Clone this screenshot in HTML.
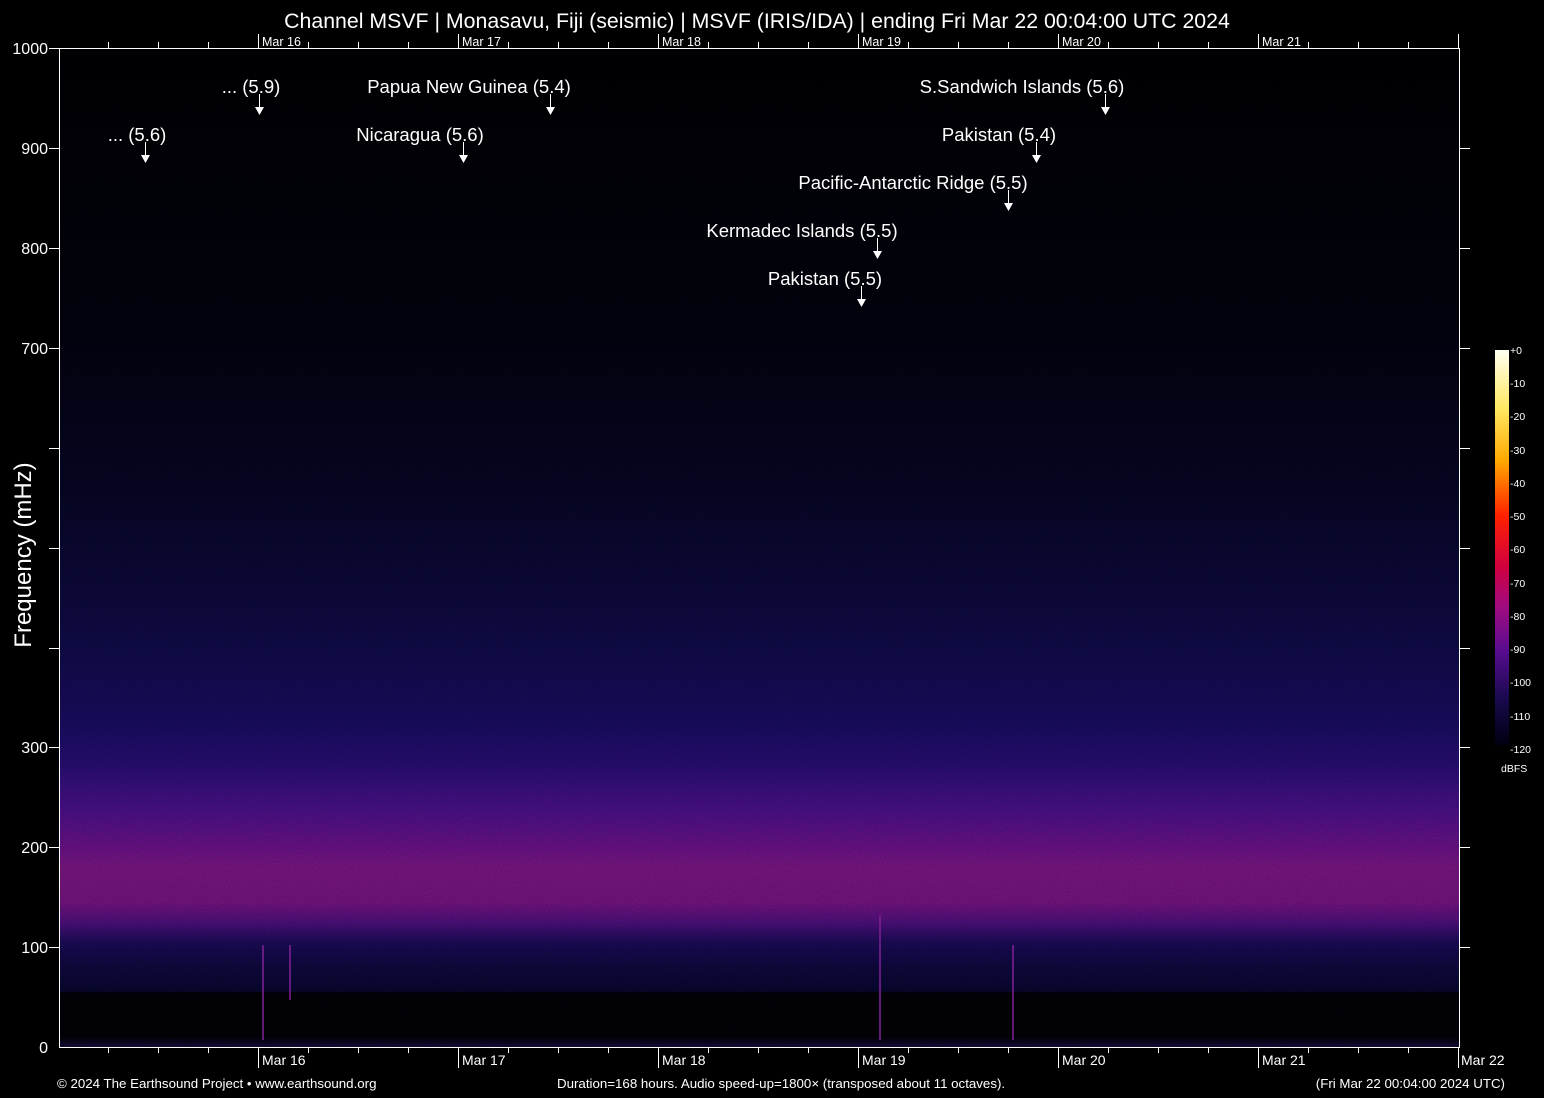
<!DOCTYPE html>
<html><head><meta charset="utf-8"><style>
html,body{margin:0;padding:0;background:#000;width:1544px;height:1098px;overflow:hidden}
svg{display:block}
text{font-family:"Liberation Sans",Arial,sans-serif;fill:#fff}
</style></head><body>
<svg width="1544" height="1098" viewBox="0 0 1544 1098">
<defs>
<linearGradient id="bg" x1="0" y1="0" x2="0" y2="1">
<stop offset="0" stop-color="#010104"/>
<stop offset="0.28" stop-color="#030310"/>
<stop offset="0.45" stop-color="#08072a"/>
<stop offset="0.6" stop-color="#120c50"/>
<stop offset="0.68" stop-color="#1c0e6c"/>
<stop offset="0.72" stop-color="#2e1080"/>
<stop offset="0.76" stop-color="#501296"/>
<stop offset="0.8" stop-color="#741494"/>
<stop offset="0.82" stop-color="#861890"/>
<stop offset="0.855" stop-color="#80168e"/>
<stop offset="0.875" stop-color="#561288"/>
<stop offset="0.895" stop-color="#1e0c60"/>
<stop offset="0.92" stop-color="#100a44"/>
<stop offset="0.944" stop-color="#0a0834"/>
<stop offset="0.946" stop-color="#020208"/>
<stop offset="0.99" stop-color="#020208"/>
<stop offset="1" stop-color="#1a0c40"/>
</linearGradient>
<linearGradient id="cb" x1="0" y1="0" x2="0" y2="1">
<stop offset="0" stop-color="#fffff0"/>
<stop offset="0.15" stop-color="#ffe860"/>
<stop offset="0.28" stop-color="#ffa800"/>
<stop offset="0.42" stop-color="#ff2000"/>
<stop offset="0.55" stop-color="#d00040"/>
<stop offset="0.65" stop-color="#a00c80"/>
<stop offset="0.76" stop-color="#5a0c90"/>
<stop offset="0.88" stop-color="#1a0a50"/>
<stop offset="1" stop-color="#000010"/>
</linearGradient>
<filter id="n"><feTurbulence type="fractalNoise" baseFrequency="0.9" numOctaves="1" seed="3"/><feColorMatrix values="0 0 0 0 0  0 0 0 0 0  0 0 0 0 0  0 0 0 0.6 0"/></filter>
</defs>
<rect x="59" y="48" width="1400" height="999" fill="url(#bg)"/>
<rect x="59" y="48" width="1400" height="999" filter="url(#n)" opacity="0.6"/>
<g stroke="#7a2090" stroke-width="2" opacity="0.8">
<line x1="263" y1="945" x2="263" y2="1040"/><line x1="880" y1="915" x2="880" y2="1040"/>
<line x1="290" y1="945" x2="290" y2="1000"/><line x1="1013" y1="945" x2="1013" y2="1040"/>
</g>
<g stroke="#fff" stroke-width="1" fill="none">
<rect x="59.5" y="48.5" width="1400" height="999"/>
</g>
<g stroke="#fff" stroke-width="1">
<line x1="49" y1="48.5" x2="59" y2="48.5"/><line x1="49" y1="148.5" x2="59" y2="148.5"/><line x1="49" y1="248.5" x2="59" y2="248.5"/><line x1="49" y1="348.5" x2="59" y2="348.5"/><line x1="49" y1="448.5" x2="59" y2="448.5"/><line x1="49" y1="548.5" x2="59" y2="548.5"/><line x1="49" y1="648.5" x2="59" y2="648.5"/><line x1="49" y1="747.5" x2="59" y2="747.5"/><line x1="49" y1="847.5" x2="59" y2="847.5"/><line x1="49" y1="947.5" x2="59" y2="947.5"/>
<line x1="1460" y1="148.5" x2="1470" y2="148.5"/><line x1="1460" y1="248.5" x2="1470" y2="248.5"/><line x1="1460" y1="348.5" x2="1470" y2="348.5"/><line x1="1460" y1="448.5" x2="1470" y2="448.5"/><line x1="1460" y1="548.5" x2="1470" y2="548.5"/><line x1="1460" y1="648.5" x2="1470" y2="648.5"/><line x1="1460" y1="747.5" x2="1470" y2="747.5"/><line x1="1460" y1="847.5" x2="1470" y2="847.5"/><line x1="1460" y1="947.5" x2="1470" y2="947.5"/>
<line x1="108.5" y1="1047" x2="108.5" y2="1053"/><line x1="158.5" y1="1047" x2="158.5" y2="1053"/><line x1="208.5" y1="1047" x2="208.5" y2="1053"/><line x1="308.5" y1="1047" x2="308.5" y2="1053"/><line x1="358.5" y1="1047" x2="358.5" y2="1053"/><line x1="408.5" y1="1047" x2="408.5" y2="1053"/><line x1="508.5" y1="1047" x2="508.5" y2="1053"/><line x1="558.5" y1="1047" x2="558.5" y2="1053"/><line x1="608.5" y1="1047" x2="608.5" y2="1053"/><line x1="708.5" y1="1047" x2="708.5" y2="1053"/><line x1="758.5" y1="1047" x2="758.5" y2="1053"/><line x1="808.5" y1="1047" x2="808.5" y2="1053"/><line x1="908.5" y1="1047" x2="908.5" y2="1053"/><line x1="958.5" y1="1047" x2="958.5" y2="1053"/><line x1="1008.5" y1="1047" x2="1008.5" y2="1053"/><line x1="1108.5" y1="1047" x2="1108.5" y2="1053"/><line x1="1158.5" y1="1047" x2="1158.5" y2="1053"/><line x1="1208.5" y1="1047" x2="1208.5" y2="1053"/><line x1="1308.5" y1="1047" x2="1308.5" y2="1053"/><line x1="1358.5" y1="1047" x2="1358.5" y2="1053"/><line x1="1408.5" y1="1047" x2="1408.5" y2="1053"/>
<line x1="258.5" y1="1047" x2="258.5" y2="1068"/><line x1="458.5" y1="1047" x2="458.5" y2="1068"/><line x1="658.5" y1="1047" x2="658.5" y2="1068"/><line x1="858.5" y1="1047" x2="858.5" y2="1068"/><line x1="1058.5" y1="1047" x2="1058.5" y2="1068"/><line x1="1258.5" y1="1047" x2="1258.5" y2="1068"/><line x1="1458.5" y1="1047" x2="1458.5" y2="1068"/>
<line x1="108.5" y1="42" x2="108.5" y2="48"/><line x1="158.5" y1="42" x2="158.5" y2="48"/><line x1="208.5" y1="42" x2="208.5" y2="48"/><line x1="308.5" y1="42" x2="308.5" y2="48"/><line x1="358.5" y1="42" x2="358.5" y2="48"/><line x1="408.5" y1="42" x2="408.5" y2="48"/><line x1="508.5" y1="42" x2="508.5" y2="48"/><line x1="558.5" y1="42" x2="558.5" y2="48"/><line x1="608.5" y1="42" x2="608.5" y2="48"/><line x1="708.5" y1="42" x2="708.5" y2="48"/><line x1="758.5" y1="42" x2="758.5" y2="48"/><line x1="808.5" y1="42" x2="808.5" y2="48"/><line x1="908.5" y1="42" x2="908.5" y2="48"/><line x1="958.5" y1="42" x2="958.5" y2="48"/><line x1="1008.5" y1="42" x2="1008.5" y2="48"/><line x1="1108.5" y1="42" x2="1108.5" y2="48"/><line x1="1158.5" y1="42" x2="1158.5" y2="48"/><line x1="1208.5" y1="42" x2="1208.5" y2="48"/><line x1="1308.5" y1="42" x2="1308.5" y2="48"/><line x1="1358.5" y1="42" x2="1358.5" y2="48"/><line x1="1408.5" y1="42" x2="1408.5" y2="48"/>
<line x1="258.5" y1="34" x2="258.5" y2="48"/><line x1="458.5" y1="34" x2="458.5" y2="48"/><line x1="658.5" y1="34" x2="658.5" y2="48"/><line x1="858.5" y1="34" x2="858.5" y2="48"/><line x1="1058.5" y1="34" x2="1058.5" y2="48"/><line x1="1258.5" y1="34" x2="1258.5" y2="48"/><line x1="1458.5" y1="34" x2="1458.5" y2="48"/>
</g>
<text x="757" y="28" font-size="21.3" text-anchor="middle">Channel MSVF | Monasavu, Fiji (seismic) | MSVF (IRIS/IDA) | ending Fri Mar 22 00:04:00 UTC 2024</text>
<g font-size="12.5"><text x="262" y="46">Mar 16</text><text x="462" y="46">Mar 17</text><text x="662" y="46">Mar 18</text><text x="862" y="46">Mar 19</text><text x="1062" y="46">Mar 20</text><text x="1262" y="46">Mar 21</text></g>
<g font-size="14"><text x="262" y="1065">Mar 16</text><text x="462" y="1065">Mar 17</text><text x="662" y="1065">Mar 18</text><text x="862" y="1065">Mar 19</text><text x="1062" y="1065">Mar 20</text><text x="1262" y="1065">Mar 21</text><text x="1461" y="1065">Mar 22</text></g>
<g font-size="16" text-anchor="end"><text x="48" y="54">1000</text><text x="48" y="154">900</text><text x="48" y="254">800</text><text x="48" y="354">700</text><text x="48" y="753">300</text><text x="48" y="853">200</text><text x="48" y="953">100</text><text x="48" y="1053">0</text></g>
<text transform="translate(31,555) rotate(-90)" font-size="24" text-anchor="middle">Frequency (mHz)</text>
<g font-size="13.3"><text x="57" y="1088">© 2024 The Earthsound Project • www.earthsound.org</text><text x="557" y="1088">Duration=168 hours. Audio speed-up=1800× (transposed about 11 octaves).</text><text x="1505" y="1088" text-anchor="end">(Fri Mar 22 00:04:00 2024 UTC)</text></g>
<g font-size="18.5" text-anchor="middle">
<text x="137" y="141">... (5.6)</text><text x="251" y="93">... (5.9)</text><text x="469" y="93">Papua New Guinea (5.4)</text><text x="420" y="141">Nicaragua (5.6)</text>
<text x="1022" y="93">S.Sandwich Islands (5.6)</text><text x="999" y="141">Pakistan (5.4)</text><text x="913" y="189">Pacific-Antarctic Ridge (5.5)</text><text x="802" y="237">Kermadec Islands (5.5)</text><text x="825" y="285">Pakistan (5.5)</text>
</g>
<g stroke="#fff" stroke-width="1">
<line x1="145.5" y1="142" x2="145.5" y2="156"/><line x1="259.5" y1="94" x2="259.5" y2="108"/><line x1="550.5" y1="94" x2="550.5" y2="108"/><line x1="463.5" y1="142" x2="463.5" y2="156"/><line x1="1105.5" y1="94" x2="1105.5" y2="108"/><line x1="1036.5" y1="142" x2="1036.5" y2="156"/><line x1="1008.5" y1="190" x2="1008.5" y2="204"/><line x1="877.5" y1="238" x2="877.5" y2="252"/><line x1="861.5" y1="286" x2="861.5" y2="300"/>
</g>
<g fill="#fff">
<polygon points="141,155 150,155 145.5,163"/><polygon points="255,107 264,107 259.5,115"/><polygon points="546,107 555,107 550.5,115"/><polygon points="459,155 468,155 463.5,163"/><polygon points="1101,107 1110,107 1105.5,115"/><polygon points="1032,155 1041,155 1036.5,163"/><polygon points="1004,203 1013,203 1008.5,211"/><polygon points="873,251 882,251 877.5,259"/><polygon points="857,299 866,299 861.5,307"/>
</g>
<rect x="1495" y="350" width="14" height="395" fill="url(#cb)"/>
<g font-size="10.5" fill="#ccc"><text x="1510" y="354">+0</text><text x="1510" y="387">-10</text><text x="1510" y="420">-20</text><text x="1510" y="454">-30</text><text x="1510" y="487">-40</text><text x="1510" y="520">-50</text><text x="1510" y="553">-60</text><text x="1510" y="587">-70</text><text x="1510" y="620">-80</text><text x="1510" y="653">-90</text><text x="1510" y="686">-100</text><text x="1510" y="720">-110</text><text x="1510" y="753">-120</text><text x="1501" y="772">dBFS</text></g>
</svg>
</body></html>
